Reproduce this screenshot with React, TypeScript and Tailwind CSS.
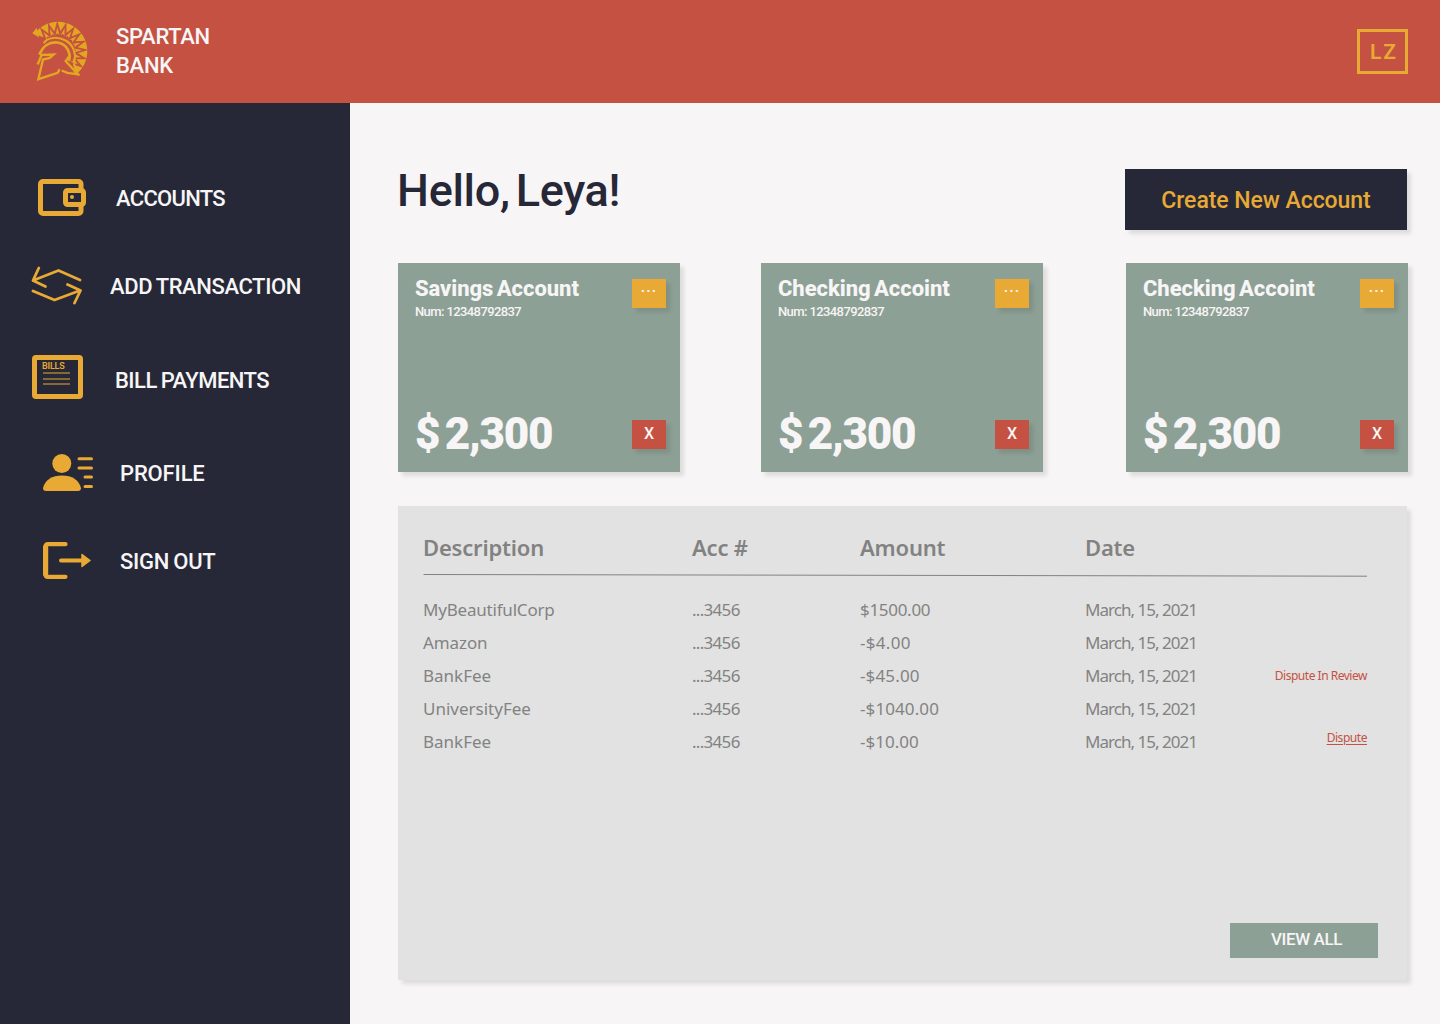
import type { ReactNode } from "react";

const GOLD = "#E8A935";

const polar = (r: number, deg: number) => {
  const a = (deg * Math.PI) / 180;
  return `${(114 + r * Math.cos(a)).toFixed(1)} ${(123 + r * Math.sin(a)).toFixed(1)}`;
};

const STEP = 17.8;
const START = -145;
const plumes = Array.from({ length: 11 }, (_, i) => START + i * STEP);

function SpartanLogo() {
  const wedges = plumes
    .map((a) => `M${polar(88, a + 0.6)}A88 88 0 0 1 ${polar(88, a + STEP - 0.6)}L${polar(60, a + STEP / 2)}Z`)
    .join("");
  const spikes = plumes
    .slice(1)
    .map((a) => `M${polar(49, a - 7)}L${polar(72, a)}L${polar(49, a + 7)}L${polar(54, a)}Z`)
    .join("");
  return (
    <svg width="60" height="62" viewBox="33 32.500 180 186" fill="none" stroke="#E3A622" strokeLinejoin="miter" className="shrink-0">
      <path d={wedges} fill="#E3A622" stroke="none" />
      <path d="M37 69 L50 53 L57 82 Z" fill="#E3A622" stroke="none" />
      <path d={spikes} fill="#E3A622" stroke="none" />
      <path d="M71 99 C82 81 113 78 137 91 C160 104 169 131 163 154 C161 169 169 185 178 196" strokeWidth="6" />
      <path d="M58 134 C68 108 88 94 112 97 C139 101 154 126 147 153" strokeWidth="8" />
      <path d="M53 163 L65 134 L101 133 L89 143 L69 148 L55 207 L113 188 L119 177" strokeWidth="7" />
      <path d="M147 139 L137 153 L163 181 L171 192 L142 188 L125 181" strokeWidth="7" />
    </svg>
  );
}

function WalletIcon() {
  return (
    <svg width="48" height="37" viewBox="0 0 48 37" fill="none" stroke={GOLD} strokeWidth="5" className="mb-px">
      <path d="M43 10 V5 A2.500 2.500 0 0 0 40.500 2.500 H5 A2.500 2.500 0 0 0 2.500 5 V32 A2.500 2.500 0 0 0 5 34.500 H40.500 A2.500 2.500 0 0 0 43 32 V27" />
      <rect x="27.500" y="11.500" width="18" height="14" rx="2" />
      <circle cx="34" cy="18" r="2" fill={GOLD} stroke="none" />
    </svg>
  );
}

function TransferIcon() {
  return (
    <svg width="51" height="40" viewBox="31 266 51 40" fill="none" stroke={GOLD} strokeWidth="2.800" strokeLinecap="round" strokeLinejoin="round">
      <path d="M80 280 L58.500 270.500 L33 280.500 M38.800 268 L33 280.500 L45.500 286.500" />
      <path d="M33 291 L54.500 300 L80 290.500 M67.500 284.500 L80.500 290.500 L74.500 303" />
    </svg>
  );
}

function BillsIcon() {
  return (
    <div className="relative h-11 w-[51px] rounded border-[5px] border-[#E8A935] text-[#E8A935]">
      <div className="absolute left-[5px] top-[1px] text-[9px] leading-[10px] font-semibold tracking-[-0.2px]">BILLS</div>
      <svg width="27" height="13" viewBox="0 0 27 13" stroke={GOLD} strokeWidth="1" className="absolute left-[6px] top-[12px]">
        <path d="M0 1H27M0 7H27M0 12H27" />
      </svg>
    </div>
  );
}

function ProfileIcon() {
  return (
    <svg width="50" height="37" viewBox="0 0 50 37" fill={GOLD} className="mb-px">
      <circle cx="18.800" cy="9.500" r="9.500" />
      <path d="M0 34 C2 26 9 21.500 19 21.500 C29 21.500 36 26 38 34 Q38 37 35 37 H3 Q0 37 0 34Z" />
      <path d="M36 4.700H48.500M36 13.900H48.500M42 23.100H48.500M42 32.500H48.500" stroke={GOLD} strokeWidth="3" strokeLinecap="round" />
    </svg>
  );
}

function SignOutIcon() {
  return (
    <svg width="48" height="37" viewBox="0 0 48 37" fill="none" stroke={GOLD} strokeLinecap="round" className="mb-px">
      <path d="M22.500 2.200H5Q2.600 2.200 2.600 4.600V32.400Q2.600 34.800 5 34.800H22.500" strokeWidth="4.200" />
      <path d="M2.600 5V32" strokeWidth="5.200" />
      <path d="M18 18.500H39" strokeWidth="4" />
      <path d="M39 12.500L47 18.500L39 24.500Z" fill={GOLD} strokeWidth="1.500" strokeLinejoin="round" />
    </svg>
  );
}

const NAV: { label: string; icon: ReactNode; row: string; text: string }[] = [
  { label: "ACCOUNTS", icon: <WalletIcon />, row: "pl-[38px]", text: "ml-[30px] tracking-[-0.7px]" },
  { label: "ADD TRANSACTION", icon: <TransferIcon />, row: "mt-10 pl-[31px]", text: "ml-[28px] tracking-[-0.4px]" },
  { label: "BILL PAYMENTS", icon: <div className="mb-[7px]"><BillsIcon /></div>, row: "mt-[46px] pl-8", text: "ml-[32px] tracking-[-0.54px]" },
  { label: "PROFILE", icon: <ProfileIcon />, row: "mt-[45px] pl-[43px]", text: "ml-[27px] tracking-[-0.15px]" },
  { label: "SIGN OUT", icon: <SignOutIcon />, row: "mt-10 pl-[43px]", text: "ml-[29px] tracking-[-0.26px]" },
];

const CARDS = [
  { title: "Savings Account", gap: "" },
  { title: "Checking Accoint", gap: "ml-[81px]" },
  { title: "Checking Accoint", gap: "ml-[83px]" },
];

function AccountCard({ title, gap }: { title: string; gap: string }) {
  return (
    <section className={`flex h-[209px] w-[282px] shrink-0 justify-between bg-[#8DA095] pl-[17px] pr-[14px] text-[#F7F5F6] shadow-[4px_4px_4px_rgba(0,0,0,0.1)] ${gap}`}>
      <div className="flex flex-col whitespace-nowrap">
        <h2 className="mt-3 text-[22px] leading-7 font-extrabold tracking-[-0.05px] [word-spacing:-2px]">{title}</h2>
        <p className="-mt-px text-[13px] leading-5 font-medium tracking-[-0.6px]">Num: 12348792837</p>
        <p className="mt-[87px] text-[44px] leading-[50px] font-black tracking-[-1.3px] [word-spacing:-4px]">$ 2,300</p>
      </div>
      <div className="flex flex-col justify-between pt-4 pb-[23px]">
        <button className="h-[29px] w-[34px] bg-[#E8A935] pb-[14px] text-center text-[16px] leading-[15px] font-medium tracking-[1px] shadow-[4px_4px_4px_rgba(0,0,0,0.1)]">...</button>
        <button className="h-[29px] w-[34px] bg-[#C45141] pb-[2px] text-center text-[16px] leading-[26px] font-medium shadow-[4px_4px_4px_rgba(0,0,0,0.1)]">X</button>
      </div>
    </section>
  );
}

const ROWS = [
  { name: "MyBeautifulCorp", amount: "$1500.00", nameCls: "tracking-[-0.2px]", amountCls: "tracking-[-0.3px]" },
  { name: "Amazon", amount: "-$4.00", nameCls: "tracking-[-0.1px]", amountCls: "tracking-[0.3px]" },
  { name: "BankFee", amount: "-$45.00", note: "review", nameCls: "", amountCls: "tracking-[0.15px]" },
  { name: "UniversityFee", amount: "-$1040.00", nameCls: "", amountCls: "tracking-[0.1px]" },
  { name: "BankFee", amount: "-$10.00", note: "dispute", nameCls: "", amountCls: "" },
];

const COLS = "grid grid-cols-[269px_168px_225px_1fr_auto] items-center";

function Transactions() {
  return (
    <section className="mt-[34px] flex h-[474px] w-[1009px] flex-col bg-[#E2E2E2] pl-[25px] pr-[29px] text-[#828282] shadow-[4px_4px_4px_rgba(0,0,0,0.1)]">
      <div className={`${COLS} mt-[25px] h-8 font-['Noto_Sans',sans-serif] text-[22px] leading-8 font-semibold tracking-[-0.2px]`}>
        <span>Description</span>
        <span>Acc #</span>
        <span>Amount</span>
        <span>Date</span>
      </div>
      <svg width="944" height="4" viewBox="0 0 944 4" className="mt-[10px]">
        <line x1="0.500" y1="1.500" x2="944" y2="3.200" stroke="#828282" strokeWidth="1" />
      </svg>
      <div className="mt-4 mr-[11px] font-['Noto_Sans',sans-serif] text-[17px]">
        {ROWS.map((r, i) => (
          <div key={i} className={`${COLS} h-[33px] leading-[33px]`}>
            <span className={r.nameCls}>{r.name}</span>
            <span className="tracking-[-0.7px]">...3456</span>
            <span className={r.amountCls}>{r.amount}</span>
            <span className="tracking-[-0.98px]">March, 15, 2021</span>
            {r.note === "review" && <span className="text-[12px] tracking-[-0.48px] text-[#C45141]">Dispute In Review</span>}
            {r.note === "dispute" && <a className="mb-2 text-[12px] leading-4 tracking-[-0.45px] text-[#C45141] underline underline-offset-2">Dispute</a>}
          </div>
        ))}
      </div>
      <button className="mt-auto mb-[22px] h-[35px] w-[148px] self-end bg-[#8DA095] pb-[3px] pl-[5px] text-center text-[17px] leading-[31px] font-medium tracking-[-0.4px] text-[#F7F5F6]">VIEW ALL</button>
    </section>
  );
}

export default function App() {
  return (
    <div className="flex h-[1024px] w-[1440px] flex-col overflow-hidden bg-[#F7F5F6] font-['Roboto',sans-serif]">
      <header className="flex h-[103px] shrink-0 items-center bg-[#C45141] pr-8 pl-[31px]">
        <SpartanLogo />
        <div className="ml-[25px] pb-[2px] text-[22px] leading-[29px] font-medium tracking-[-0.3px] text-[#F7F5F6]">
          <div>SPARTAN</div>
          <div>BANK</div>
        </div>
        <div className="ml-auto flex h-[45px] w-[51px] items-center justify-center border-[3px] border-[#E8A935] pt-[3px] pl-[3px] text-[21px] font-semibold tracking-[2px] text-[#E8A935]">LZ</div>
      </header>
      <div className="flex min-h-0 flex-1">
        <aside className="w-[350px] shrink-0 bg-[#262837] pt-[71px]">
          <nav>
            {NAV.map((n) => (
              <a key={n.label} className={`flex h-12 items-center ${n.row}`}>
                {n.icon}
                <span className={`pt-[2px] text-[22px] leading-[30px] font-medium whitespace-nowrap text-[#F7F5F6] [word-spacing:-1px] ${n.text}`}>{n.label}</span>
              </a>
            ))}
          </nav>
        </aside>
        <main className="flex-1 pt-[66px] pl-12">
          <div className="flex h-[61px] w-[1009px] justify-between">
            <h1 className="-ml-px text-[45px] leading-[44px] font-medium tracking-[-0.3px] text-[#262837] [word-spacing:-5px]">Hello, Leya!</h1>
            <button className="h-[61px] w-[282px] bg-[#262837] text-center text-[23px] leading-[63px] font-medium tracking-[-0.05px] text-[#E8A935] shadow-[4px_4px_4px_rgba(0,0,0,0.1)]">Create New Account</button>
          </div>
          <div className="mt-[33px] flex">
            {CARDS.map((c, i) => <AccountCard key={i} {...c} />)}
          </div>
          <Transactions />
        </main>
      </div>
    </div>
  );
}
